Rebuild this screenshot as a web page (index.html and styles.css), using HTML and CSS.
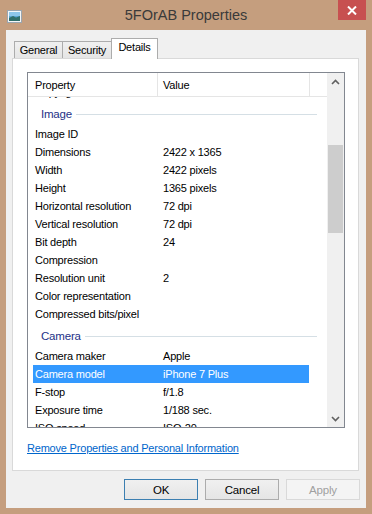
FILE: index.html
```html
<!DOCTYPE html>
<html lang="en">
<head>
    <meta charset="UTF-8">
    <title>5FOrAB Properties</title>
    <link rel="stylesheet" href="styles.css">
</head>
<body>

    <div class="window">
        <!-- Title Bar -->
        <div class="titlebar">
            <div class="tb-left">
                <svg class="app-icon" width="15" height="13" viewBox="0 0 15 13">
                    <rect x="0.5" y="0.5" width="14" height="12" fill="#f4f6f8" stroke="#9aa6b0"/>
                    <rect x="2" y="2" width="11" height="9" fill="#5aa7d6"/>
                    <rect x="2" y="2" width="11" height="4" fill="#8cc6ea"/>
                    <path d="M2 8 L6 6 L9 7.5 L13 6 L13 11 L2 11 Z" fill="#2f6f6a"/>
                </svg>
            </div>
            <div class="title">5FOrAB Properties</div>
            <div class="tb-right">
                <div class="close-btn">
                    <svg width="10" height="9" viewBox="0 0 10 9">
                        <path d="M1 0.5 L9 8.5 M9 0.5 L1 8.5" stroke="#fff" stroke-width="2"/>
                    </svg>
                </div>
            </div>
        </div>

        <!-- Client Area -->
        <div class="client">
            <div class="tabs">
                <div class="tab tab-general">General</div>
                <div class="tab tab-security">Security</div>
                <div class="tab tab-details active">Details</div>
            </div>

            <div class="tab-page">
                <div class="listview">
                    <div class="list-main">
                        <div class="list-header">
                            <div class="hcol hcol-prop">Property</div>
                            <div class="hcol hcol-val">Value</div>
                            <div class="hcol hcol-rest"></div>
                        </div>
                        <div class="list-body">
                            <div class="list-scroll" id="rows"></div>
                        </div>
                    </div>
                    <div class="scrollbar">
                        <div class="sb-btn">
                            <svg width="9" height="6" viewBox="0 0 9 6"><path d="M1 5 L4.5 1.5 L8 5" fill="none" stroke="#606060" stroke-width="1.6"/></svg>
                        </div>
                        <div class="sb-track">
                            <div class="sb-thumb"></div>
                        </div>
                        <div class="sb-btn">
                            <svg width="9" height="6" viewBox="0 0 9 6"><path d="M1 1 L4.5 4.5 L8 1" fill="none" stroke="#606060" stroke-width="1.6"/></svg>
                        </div>
                    </div>
                </div>
                <a class="remove-link" href="#">Remove Properties and Personal Information</a>
            </div>

            <div class="buttons">
                <button class="btn btn-default">OK</button>
                <button class="btn">Cancel</button>
                <button class="btn btn-disabled">Apply</button>
            </div>
        </div>
    </div>

    <script>
        // rows of the details list: [property, value] or a group name
        const rows = [
            ["Copyright", ""],
            "Image",
            ["Image ID", ""],
            ["Dimensions", "2422 x 1365"],
            ["Width", "2422 pixels"],
            ["Height", "1365 pixels"],
            ["Horizontal resolution", "72 dpi"],
            ["Vertical resolution", "72 dpi"],
            ["Bit depth", "24"],
            ["Compression", ""],
            ["Resolution unit", "2"],
            ["Color representation", ""],
            ["Compressed bits/pixel", ""],
            "Camera",
            ["Camera maker", "Apple"],
            ["Camera model", "iPhone 7 Plus", true],
            ["F-stop", "f/1.8"],
            ["Exposure time", "1/188 sec."],
            ["ISO speed", "ISO-20"]
        ];

        const container = document.getElementById("rows");
        rows.forEach(function (r) {
            let el = document.createElement("div");
            if (typeof r === "string") {
                el.className = "group";
                el.innerHTML = '<span class="group-label"></span><span class="group-line"></span>';
                el.querySelector(".group-label").textContent = r;
            } else {
                el.className = "row" + (r[2] ? " selected" : "");
                el.innerHTML = '<span class="cell-prop"></span><span class="cell-val"></span>';
                el.querySelector(".cell-prop").textContent = r[0];
                el.querySelector(".cell-val").textContent = r[1];
            }
            container.appendChild(el);
        });
    </script>

</body>
</html>
```

FILE: styles.css
```css
* { margin: 0; padding: 0; box-sizing: border-box; }
body { background: #c59e7e; font-family: 'Liberation Sans', Arial, sans-serif; font-size: 11px; letter-spacing: -0.2px; color: #000; }

.window { width: 372px; height: 514px; background: #c59e7e; }

/* Title Bar */
.titlebar { height: 30px; display: grid; grid-template-columns: 1fr auto 1fr; }
.tb-left { padding: 10px 0 0 7px; }
.app-icon { display: block; }
.title { font-size: 14.5px; letter-spacing: 0; line-height: 30px; color: #3a3a3a; }
.tb-right { display: flex; justify-content: flex-end; align-items: flex-start; padding-right: 6px; }
.close-btn {
    width: 28px; height: 20px; background: #c75050;
    display: flex; align-items: center; justify-content: center;
}
.close-btn svg { display: block; }

/* Client */
.client { margin: 0 6px; height: 478px; background: #f0f0f0; padding: 8px 6px 0 6px; }

/* Tabs */
.tabs { display: flex; align-items: flex-end; height: 20px; padding-left: 2px; }
.tab {
    height: 17px; border: 1px solid #acacac; border-bottom: none;
    background: linear-gradient(#f0f0f0, #e5e5e5); text-align: center; line-height: 17px;
}
.tab-general { width: 49px; }
.tab-security { width: 50px; margin-left: -1px; }
.tab.active {
    width: 47px; height: 21px; margin-left: -1px; margin-bottom: -1px; background: #fff;
    position: relative; z-index: 1; line-height: 17px;
}

/* Tab page */
.tab-page {
    width: 347px; height: 413px; background: #fff; border: 1px solid #d9d9d9;
    padding: 13px 0 0 14px;
}

/* List view */
.listview { width: 318px; height: 356px; border: 1px solid #828790; display: flex; }
.list-main { width: 299px; display: flex; flex-direction: column; }
.list-header { height: 24px; display: flex; border-bottom: 1px solid #e5e5e5; }
.hcol { line-height: 24px; border-right: 1px solid #e5e5e5; }
.hcol-prop { width: 130px; padding-left: 7px; }
.hcol-val { width: 152px; padding-left: 5px; }
.hcol-rest { flex: 1; border-right: none; }

.list-body { flex: 1; overflow: hidden; }
.list-scroll { margin-top: -14px; }

.row { height: 18px; margin-left: 5px; width: 276px; display: flex; line-height: 18px; white-space: nowrap; }
.cell-prop { width: 130px; padding-left: 2px; }
.cell-val { flex: 1; }
.row.selected { background: #3399ff; color: #fff; }

.group { height: 24px; padding-top: 2px; display: flex; align-items: center; padding-left: 13px; padding-right: 10px; }
.group-label { color: #1e3287; font-size: 11.5px; }
.group-line { flex: 1; height: 1px; background: #d5dfe5; margin-left: 4px; }

/* Scrollbar */
.scrollbar { width: 17px; background: #f0f0f0; display: flex; flex-direction: column; }
.sb-btn { height: 17px; display: flex; align-items: center; justify-content: center; }
.sb-btn svg { display: block; }
.sb-track { flex: 1; }
.sb-thumb { margin: 55px 1px 0 1px; height: 88px; background: #cdcdcd; }

/* Link */
.remove-link {
    display: inline-block; margin-top: 13px; color: #0066cc; text-decoration: underline;
    line-height: 15px;
}

/* Buttons */
.buttons { display: flex; justify-content: flex-end; gap: 7px; margin-top: 8px; }
.btn {
    width: 74px; height: 21px; font-family: inherit; font-size: 11.5px; letter-spacing: -0.2px; color: #000;
    background: linear-gradient(#f0f0f0, #e5e5e5); border: 1px solid #acacac;
}
.btn-default { border-color: #3c7fb1; }
.btn-disabled { background: #f4f4f4; border-color: #d9d9d9; color: #a0a0a0; }
```
